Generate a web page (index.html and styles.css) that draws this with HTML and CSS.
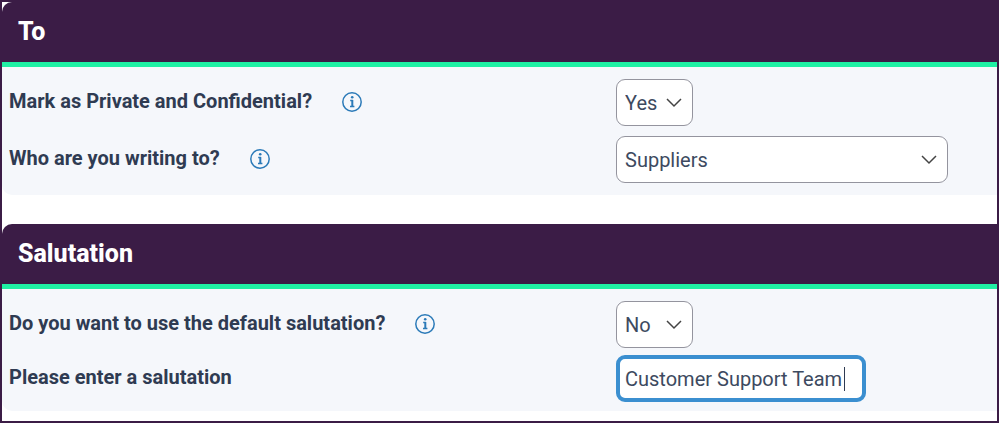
FILE: index.html
```html
<!DOCTYPE html>
<html lang="en">
<head>
  <meta charset="UTF-8">
  <meta name="viewport" content="width=device-width, initial-scale=1">
  <title>Letter details</title>
  <link rel="stylesheet" href="styles.css">
</head>
<body>
  <form class="letter-form">
    <section class="panel">
      <h2>To</h2>
      <div class="panel-body">
        <div class="row">
          <div class="question">
            <label for="confidential">Mark as Private and Confidential?</label>
            <svg class="info" viewBox="0 0 20 20" role="img" aria-label="Information">
              <circle cx="10" cy="10" r="9.2"/>
              <path class="stem" d="M10.3 8v6.5"/>
              <path d="M8.2 8.5h2.6M8 14.5h4.4"/>
              <circle class="dot" cx="10.2" cy="5.3" r="1.3"/>
            </svg>
          </div>
          <select id="confidential" class="short">
            <option selected>Yes</option>
            <option>No</option>
          </select>
        </div>
        <div class="row">
          <div class="question">
            <label for="recipient">Who are you writing to?</label>
            <svg class="info" viewBox="0 0 20 20" role="img" aria-label="Information">
              <circle cx="10" cy="10" r="9.2"/>
              <path class="stem" d="M10.3 8v6.5"/>
              <path d="M8.2 8.5h2.6M8 14.5h4.4"/>
              <circle class="dot" cx="10.2" cy="5.3" r="1.3"/>
            </svg>
          </div>
          <select id="recipient" class="long">
            <option>Suppliers</option>
          </select>
        </div>
      </div>
    </section>

    <section class="panel">
      <h2>Salutation</h2>
      <div class="panel-body compact">
        <div class="row">
          <div class="question">
            <label for="defaultSalutation">Do you want to use the default salutation?</label>
            <svg class="info" viewBox="0 0 20 20" role="img" aria-label="Information">
              <circle cx="10" cy="10" r="9.2"/>
              <path class="stem" d="M10.3 8v6.5"/>
              <path d="M8.2 8.5h2.6M8 14.5h4.4"/>
              <circle class="dot" cx="10.2" cy="5.3" r="1.3"/>
            </svg>
          </div>
          <select id="defaultSalutation" class="short">
            <option>Yes</option>
            <option selected>No</option>
          </select>
        </div>
        <div class="row">
          <div class="question">
            <label for="salutation">Please enter a salutation</label>
          </div>
          <input type="text" id="salutation" value="Customer Support Team">
        </div>
      </div>
    </section>
  </form>
</body>
</html>
```
FILE: styles.css
```css
* {
  box-sizing: border-box;
}
body {
  margin: 0;
  font-family: Roboto, "Liberation Sans", sans-serif;
  font-size: 20px;
  line-height: 24px;
  color: #2f3b52;
  background-color: #fff;
}
.letter-form {
  display: flex;
  flex-direction: column;
  gap: 29px;
  padding-bottom: 10px;
  border: 2px solid #3b1c46;
}
.panel {
  border-radius: 10px 0 0 10px;
  overflow: hidden;
  background-color: #f5f7fb;
}
h2 {
  margin: 0;
  padding: 16px;
  font-size: 25px;
  line-height: 28px;
  font-weight: 800;
  color: #fff;
  background-color: #3b1c46;
  border-bottom: 5px solid #1ff0a4;
}
.panel-body {
  display: flex;
  flex-direction: column;
  gap: 10px;
  padding: 12px 7px;
}
.panel-body.compact {
  gap: 7px;
  padding-bottom: 9px;
}
.row {
  display: grid;
  grid-template-columns: 607fr 374fr;
  align-items: center;
}
.question {
  display: flex;
  align-items: center;
  gap: 30px;
  padding-bottom: 4px;
  font-weight: 700;
}
.info {
  width: 20px;
  height: 20px;
  margin-top: 3px;
  fill: none;
  stroke: #2b7ab8;
  stroke-width: 1.5;
}
.info .stem {
  stroke-width: 2;
}
.info .dot {
  fill: #2b7ab8;
  stroke: none;
}
select,
input {
  height: 47px;
  padding: 0 8px;
  font: inherit;
  color: #3d4a60;
  background-color: #fff;
  border: 1px solid #94949e;
  border-radius: 9px;
}
select {
  appearance: none;
  background-image: url("data:image/svg+xml,%3Csvg xmlns='http://www.w3.org/2000/svg' viewBox='0 0 16 10'%3E%3Cpath d='M1 1l7 7 7-7' fill='none' stroke='%23444' stroke-width='1.5'/%3E%3C/svg%3E");
  background-repeat: no-repeat;
  background-position: right 10px center;
  background-size: 16px 10px;
}
.short {
  width: 77px;
}
.long {
  width: 100%;
  max-width: 332px;
}
/* focused field, with the text cursor at the end of the value */
#salutation {
  width: 250px;
  padding: 0 5px;
  border: 4px solid #3b8fd0;
  outline: none;
  background-image: linear-gradient(#2f3b52, #2f3b52);
  background-repeat: no-repeat;
  background-size: 1px 24px;
  background-position: right 17px center;
}
```
